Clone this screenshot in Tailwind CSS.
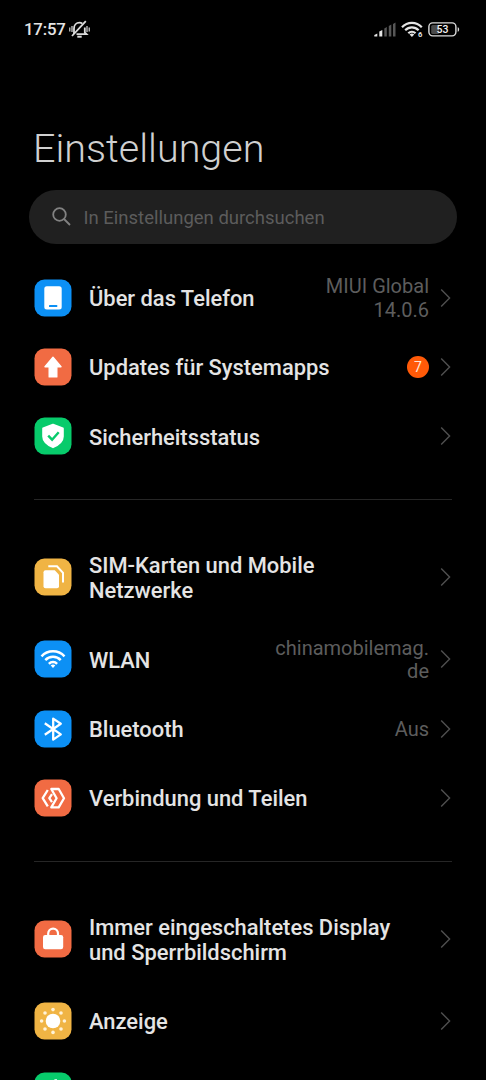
<!DOCTYPE html>
<html lang="de">
<head>
  <meta charset="UTF-8">
  <meta name="viewport" content="width=device-width, initial-scale=1.0">
  <title>Einstellungen</title>
  <script src="https://cdn.jsdelivr.net/npm/@tailwindcss/browser@4"></script>
</head>
<body class="bg-black font-['Roboto',sans-serif] text-[#e4e4e4]">
  <!-- shared chevron -->
  <svg class="hidden">
    <symbol id="chevron" viewBox="0 0 11 20">
      <path d="M1.2 1.5 9.6 10 1.2 18.5" fill="none" stroke="#4f4f4f" stroke-width="1.4"/>
    </symbol>
  </svg>

  <div class="h-[1080px] w-[486px] overflow-hidden">
    <header class="flex h-[58px] items-center justify-between pl-6 pr-[25px]">
      <div class="flex items-center gap-[3px]">
        <span class="text-[16.8px] leading-5 font-medium tracking-[-0.2px]">17:57</span>
        <svg class="h-[19px] w-[21px]" viewBox="0 0 21 19" fill="none" stroke="#dcdcdc" stroke-width="1.8">
          <path d="M5 14V8.500C5 5 7.300 2.700 10.500 2.700c1 0 2 .3 2.800.8M15.800 7.500v5l1.700 1.700H7.500"/>
          <path d="M3 16 16.800 1.200"/>
          <path d="M8.300 16.700h4.400" stroke-width="2"/>
          <path d="M.8 7.500v4M3 6v6M18 6v6M20.200 7.500v4" stroke-width="1.200"/>
        </svg>
      </div>
      <div class="flex items-center">
        <svg class="h-[15px] w-[22px]" viewBox="0 0 22 15">
          <path d="M.3 14.500v-1.500l3-1.500v3z" fill="#e4e4e4"/>
          <path d="M5.300 9.500 8.300 8v6.500h-3z" fill="#e4e4e4"/>
          <path d="M10.300 6.500 12.800 5v9.500h-2.500zM14.800 4l2.500-1.400v11.900h-2.500zM19 1.900 21.500.5v14H19z" fill="#565656"/>
        </svg>
        <svg class="ml-[5px] h-[19px] w-[23px]" viewBox="0 0 23 19" fill="none" stroke="#e4e4e4" stroke-width="2.200">
          <path d="M1 7.200C6.400 1.400 15.400 1.400 20.800 7.200M4.200 10.300c3.800-3.900 9.600-3.900 13.400 0M7.300 13.300c2-2.100 5.200-2.100 7.200 0"/>
          <path d="m10.900 17-2.300-2.500c1.300-1.200 3.300-1.200 4.600 0z" fill="#e4e4e4" stroke="none"/>
          <text x="17" y="17.300" font-size="7.500" font-weight="700" fill="#e4e4e4" stroke="none">6</text>
        </svg>
        <svg class="ml-[4px] h-[15px] w-[33px]" viewBox="0 0 33 15">
          <rect x="3.200" y="3" width="8" height="9" rx="1.500" fill="#4a4a4a"/>
          <rect x=".9" y=".9" width="27" height="13" rx="3.800" fill="none" stroke="#dcdcdc" stroke-width="1.400"/>
          <path d="M29.700 5.200c1.900.5 1.900 4 0 4.500z" fill="#dcdcdc"/>
          <text x="14.400" y="11.200" font-size="10.500" font-weight="500" text-anchor="middle" fill="#f0f0f0">53</text>
        </svg>
      </div>
    </header>

    <h1 class="mt-[66px] pl-[33px] text-[39.5px] leading-[50px] font-light text-[#d0d0d0]">Einstellungen</h1>

    <div class="mt-[16px] ml-[29px] flex h-[54px] w-[428px] items-center rounded-full bg-[#202020] pl-[23px]">
      <svg class="h-5 w-5" viewBox="0 0 20 20" fill="none" stroke="#828282" stroke-width="1.800">
        <circle cx="7.500" cy="7.500" r="6.300"/>
        <path d="m12 12 6 6"/>
      </svg>
      <span class="ml-[11.5px] pt-px text-[18.500px] leading-6 text-[#5c5c5c]">In Einstellungen durchsuchen</span>
    </div>

    <main class="mt-[19px] pl-[34px] pr-[34px]">
      <section>
        <a class="flex h-[69.4px] items-center pr-px">
          <svg class="size-[38px] shrink-0" viewBox="0 0 38 38">
            <rect x=".5" y=".5" width="37" height="37" rx="10" fill="#0c90f5"/>
            <rect x="10.300" y="7.300" width="17.400" height="23.200" rx="2.500" fill="#fff"/>
            <rect x="15" y="26" width="8.300" height="2.100" rx=".6" fill="#0c90f5"/>
          </svg>
          <span class="ml-[17px] flex-1 pt-[2px] text-[21.9px] leading-[25.6px] font-medium">Über das Telefon</span>
          <span class="w-[140px] pt-[2px] text-right text-[20px] leading-[23.4px] text-[#5d5d5d]">MIUI Global 14.0.6</span>
          <svg class="ml-[11px] h-5 w-[11px] shrink-0"><use href="#chevron"/></svg>
        </a>
        <a class="flex h-[69.4px] items-center pr-px">
          <svg class="size-[38px] shrink-0" viewBox="0 0 38 38">
            <rect x=".5" y=".5" width="37" height="37" rx="10" fill="#f16b43"/>
            <path d="M19 9.200 27 18.700h-4.200v10.200h-7.600V18.700H11z" fill="#fff" stroke="#fff" stroke-width="1.400" stroke-linejoin="round"/>
          </svg>
          <span class="ml-[17px] flex-1 pt-[2px] text-[21.9px] leading-[25.6px] font-medium">Updates für Systemapps</span>
          <span class="flex size-[22px] items-center justify-center rounded-full bg-[#ff5a08] text-[14px] text-[#ffe8d8]">7</span>
          <svg class="ml-[11px] h-5 w-[11px] shrink-0"><use href="#chevron"/></svg>
        </a>
        <a class="flex h-[69.4px] items-center pr-px">
          <svg class="size-[38px] shrink-0" viewBox="0 0 38 38">
            <rect x=".5" y=".5" width="37" height="37" rx="10" fill="#07cb6b"/>
            <path d="M19 7.800 28.800 11.500v8c0 4.600-4.200 8.200-9.800 10.700-5.600-2.500-9.800-6.100-9.800-10.700v-8z" fill="#fff" stroke="#fff" stroke-width="2" stroke-linejoin="round"/>
            <path d="m14.200 18.700 3.900 4 6.600-7.400" fill="none" stroke="#07cb6b" stroke-width="2.400"/>
          </svg>
          <span class="ml-[17px] flex-1 pt-[2px] text-[21.9px] leading-[25.6px] font-medium">Sicherheitsstatus</span>
          <svg class="ml-[11px] h-5 w-[11px] shrink-0"><use href="#chevron"/></svg>
        </a>
      </section>

      <hr class="mt-[28px] mb-[29px] border-[#262626]">

      <section>
        <a class="flex h-[95.6px] items-center pr-px">
          <svg class="size-[38px] shrink-0" viewBox="0 0 38 38">
            <rect x=".5" y=".5" width="37" height="37" rx="10" fill="#f0b444"/>
            <path d="M11.500 12.200h9.300l4.200 4.600v11.500a2 2 0 0 1-2 2H11.500a2 2 0 0 1-2-2V14.200a2 2 0 0 1 2-2z" fill="#fff"/>
            <path d="M14.300 8.300h8.700l6 6.500v9.700" fill="none" stroke="#fff" stroke-width="2"/>
          </svg>
          <span class="ml-[17px] flex-1 pt-[3px] text-[21.9px] leading-[25.6px] font-medium">SIM-Karten und Mobile<br>Netzwerke</span>
          <svg class="ml-[11px] h-5 w-[11px] shrink-0"><use href="#chevron"/></svg>
        </a>
        <a class="flex h-[69.4px] items-center pr-px">
          <svg class="size-[38px] shrink-0" viewBox="0 0 38 38">
            <rect x=".5" y=".5" width="37" height="37" rx="10" fill="#0c90f5"/>
            <path d="M7.500 16.300c6.300-6.600 16.700-6.600 23 0M11.300 20.200c4.200-4.500 11.200-4.500 15.400 0M14.900 23.800c2.300-2.400 5.900-2.400 8.200 0" fill="none" stroke="#fff" stroke-width="2.500"/>
            <path d="m19 28-2.300-2.500c1.300-1.200 3.300-1.200 4.600 0z" fill="#fff"/>
          </svg>
          <span class="ml-[17px] flex-1 pt-[2px] text-[21.9px] leading-[25.6px] font-medium">WLAN</span>
          <span class="pt-[2px] text-right text-[20px] leading-[23.4px] text-[#5d5d5d]">chinamobilemag.<br>de</span>
          <svg class="ml-[11px] h-5 w-[11px] shrink-0"><use href="#chevron"/></svg>
        </a>
        <a class="flex h-[69.4px] items-center pr-px">
          <svg class="size-[38px] shrink-0" viewBox="0 0 38 38">
            <rect x=".5" y=".5" width="37" height="37" rx="10" fill="#0c90f5"/>
            <path d="M10.800 13.300 26.800 24.400 19.200 29.600V8.600l7.600 5.100-16 11" fill="none" stroke="#fff" stroke-width="2.300" stroke-linejoin="round"/>
          </svg>
          <span class="ml-[17px] flex-1 pt-[2px] text-[21.9px] leading-[25.6px] font-medium">Bluetooth</span>
          <span class="pt-[2px] text-right text-[20px] leading-[23.4px] text-[#5d5d5d]">Aus</span>
          <svg class="ml-[11px] h-5 w-[11px] shrink-0"><use href="#chevron"/></svg>
        </a>
        <a class="flex h-[69.4px] items-center pr-px">
          <svg class="size-[38px] shrink-0" viewBox="0 0 38 38">
            <rect x=".5" y=".5" width="37" height="37" rx="10" fill="#f16b43"/>
            <g fill="none" stroke="#fff" stroke-width="2.300" stroke-linejoin="round">
              <path d="M13.800 11 8.700 19.200l5.100 8.200"/>
              <path d="M18 15.200 15.300 19.200 18 23.200"/>
              <path d="M17.300 10h7.400L30 19.200l-5.300 9.200h-7.400L22.600 19.200z"/>
            </g>
          </svg>
          <span class="ml-[17px] flex-1 pt-[2px] text-[21.9px] leading-[25.6px] font-medium">Verbindung und Teilen</span>
          <svg class="ml-[11px] h-5 w-[11px] shrink-0"><use href="#chevron"/></svg>
        </a>
      </section>

      <hr class="mt-[28px] mb-[29px] border-[#262626]">

      <section>
        <a class="flex h-[95.6px] items-center pr-px">
          <svg class="size-[38px] shrink-0" viewBox="0 0 38 38">
            <rect x=".5" y=".5" width="37" height="37" rx="10" fill="#f16b43"/>
            <rect x="9" y="15" width="20.200" height="14.300" rx="2.200" fill="#fff"/>
            <path d="M14.200 16v-2.500a4.900 4.900 0 0 1 9.800 0V16" fill="none" stroke="#fff" stroke-width="2.200"/>
          </svg>
          <span class="ml-[17px] flex-1 pt-[3px] text-[21.9px] leading-[25.6px] font-medium">Immer eingeschaltetes Display<br>und Sperrbildschirm</span>
          <svg class="ml-[11px] h-5 w-[11px] shrink-0"><use href="#chevron"/></svg>
        </a>
        <a class="flex h-[69.4px] items-center pr-px">
          <svg class="size-[38px] shrink-0" viewBox="0 0 38 38">
            <rect x=".5" y=".5" width="37" height="37" rx="10" fill="#f0b444"/>
            <circle cx="19" cy="19" r="7.300" fill="#fff"/>
            <g fill="#fff3d8">
              <circle cx="19" cy="7.600" r="1.800"/>
              <circle cx="27" cy="11" r="1.800"/>
              <circle cx="30.400" cy="19" r="1.800"/>
              <circle cx="27" cy="27" r="1.800"/>
              <circle cx="19" cy="30.400" r="1.800"/>
              <circle cx="11" cy="27" r="1.800"/>
              <circle cx="7.600" cy="19" r="1.800"/>
              <circle cx="11" cy="11" r="1.800"/>
            </g>
          </svg>
          <span class="ml-[17px] flex-1 pt-[2px] text-[21.9px] leading-[25.6px] font-medium">Anzeige</span>
          <svg class="ml-[11px] h-5 w-[11px] shrink-0"><use href="#chevron"/></svg>
        </a>
        <!-- next row, cut off by the screen edge -->
        <a class="flex h-[69.4px] items-center pr-px">
          <svg class="size-[38px] shrink-0" viewBox="0 0 38 38">
            <rect x=".5" y=".5" width="37" height="37" rx="10" fill="#07cb6b"/>
            <path d="M17.500 9.500 21 7.200h2v6h-5.500z" fill="#fff"/>
          </svg>
        </a>
      </section>
    </main>
  </div>
</body>
</html>
